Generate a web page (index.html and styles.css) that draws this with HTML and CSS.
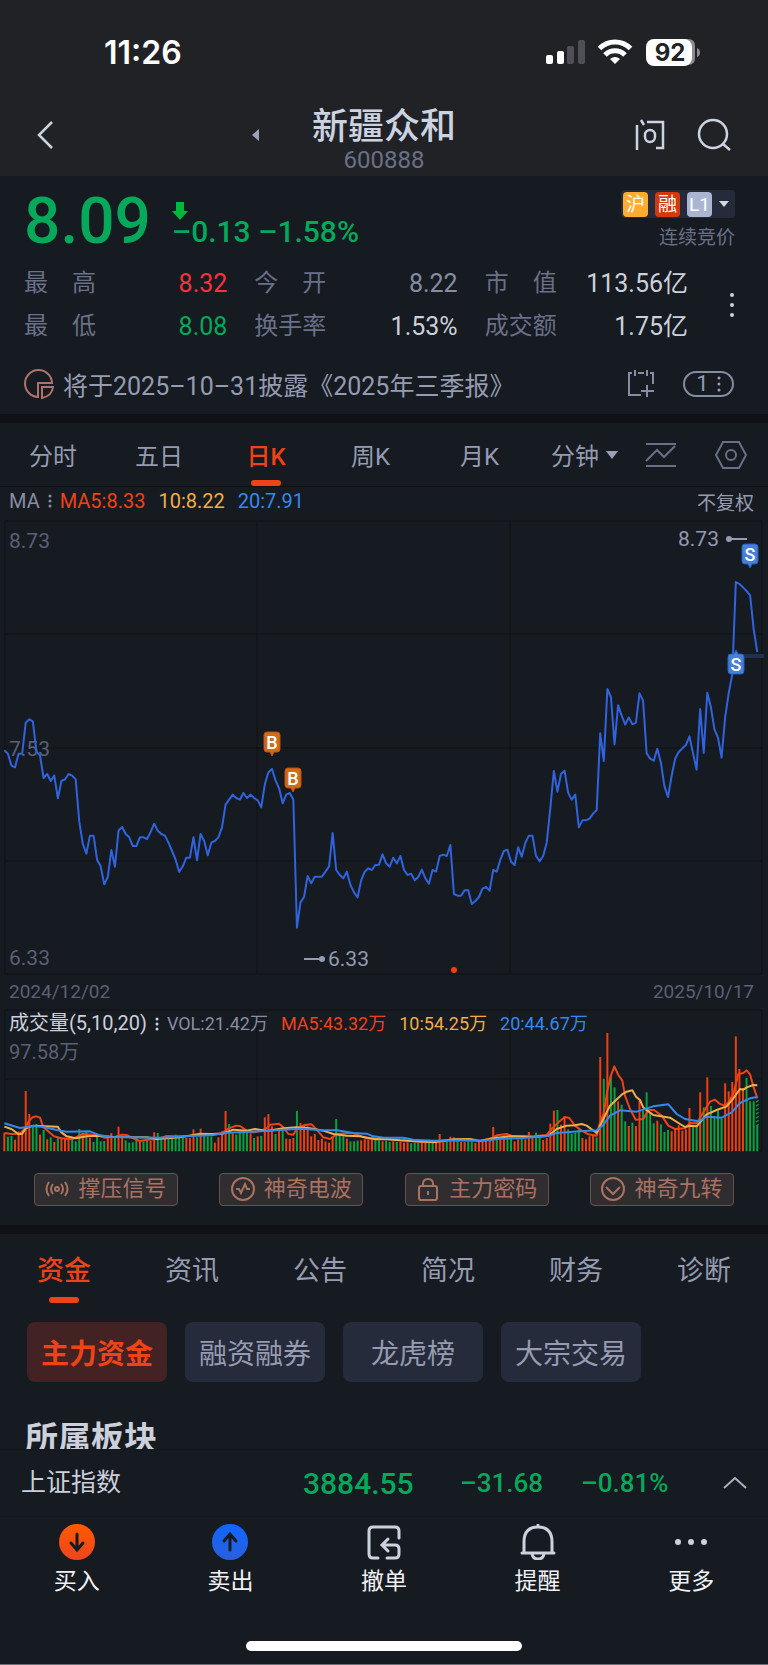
FILE: index.html
```html
<!DOCTYPE html>
<html lang="zh-CN">
<head>
    <meta charset="UTF-8">
    <meta name="viewport" content="width=device-width, initial-scale=1.0">
    <title>新疆众和 600888</title>
    <link rel="stylesheet" href="styles.css">
</head>
<body>
    <header class="header">
        <div class="status-bar">
            <span class="time">11:26</span>
            <svg class="status-icons" width="156" height="30" viewBox="0 0 156 30">
                <rect x="1" y="17" width="7" height="9" rx="2" fill="#fff"/>
                <rect x="12" y="13" width="7" height="13" rx="2" fill="#fff"/>
                <rect x="22" y="8" width="7" height="18" rx="2" fill="#4f5055"/>
                <rect x="33" y="2" width="7" height="24" rx="2" fill="#4f5055"/>
                <g fill="none" stroke="#fff" stroke-width="5">
                    <path d="M54.500 10.500a21.500 21.500 0 0 1 31 0"/>
                    <path d="M60 17a14 14 0 0 1 20 0"/>
                </g>
                <path d="M65 21q5-4 10 0l-5 5z" fill="#fff"/>
                <path d="M109 1h34q7 0 7 7v12q0 7-7 7h-34z" fill="#8b8c90"/>
                <rect x="101" y="1" width="46" height="27" rx="8" fill="#fff"/>
                <path d="M152 10q3 1 3 4.500t-3 4.500z" fill="#8b8c90"/>
                <text x="125" y="23" text-anchor="middle" class="battery-text">92</text>
            </svg>
        </div>
        <nav class="nav">
            <div class="nav-left">
                <button class="icon-button" aria-label="返回">
                    <svg width="18" height="30" viewBox="0 0 18 30"><path d="M16 2 3 15l13 13" fill="none" stroke="#ccd3e0" stroke-width="2.500"/></svg>
                </button>
                <button class="icon-button" aria-label="上一只">
                    <svg width="8" height="12" viewBox="0 0 8 12"><path d="M7 0v12L0 6z" fill="#9aa2b8"/></svg>
                </button>
            </div>
            <div class="nav-title">
                <h1>新疆众和</h1>
                <p>600888</p>
            </div>
            <div class="nav-right">
                <button class="icon-button" aria-label="问">
                    <svg width="32" height="34" viewBox="0 0 32 34" fill="none" stroke="#ccd3e0" stroke-width="2.500">
                        <path d="M3 7v25M7 2l3 5M13 4h16v26h-7"/>
                        <rect x="11" y="12" width="10" height="12" rx="5"/>
                    </svg>
                </button>
                <button class="icon-button" aria-label="搜索">
                    <svg width="36" height="34" viewBox="0 0 36 34" fill="none" stroke="#ccd3e0" stroke-width="2.500">
                        <circle cx="17" cy="16" r="14"/><path d="m27 26 7 6"/>
                    </svg>
                </button>
            </div>
        </nav>
    </header>

    <section class="quote">
        <div class="quote-top">
            <span class="price">8.09</span>
            <div class="change">
                <svg width="16" height="18" viewBox="0 0 16 18"><path d="M4 0h8v9h4l-8 9-8-9h4z" fill="#00b83c"/></svg>
                <p><span>–0.13</span> <span>–1.58%</span></p>
            </div>
            <div class="quote-side">
                <button class="badges" aria-label="沪 融 L1">
                    <span class="badge badge-hu">沪</span>
                    <span class="badge badge-rong">融</span>
                    <span class="badge badge-l1">L1</span>
                    <svg width="10" height="6" viewBox="0 0 10 6"><path d="M0 0h10L5 6z" fill="#d5d9e4"/></svg>
                </button>
                <p>连续竞价</p>
            </div>
        </div>
        <div class="stats-row">
            <dl class="stats">
                <div><dt>最　高</dt><dd class="red">8.32</dd></div>
                <div><dt>今　开</dt><dd class="muted">8.22</dd></div>
                <div><dt>市　值</dt><dd>113.56亿</dd></div>
                <div><dt>最　低</dt><dd class="green">8.08</dd></div>
                <div><dt>换手率</dt><dd>1.53%</dd></div>
                <div><dt>成交额</dt><dd>1.75亿</dd></div>
            </dl>
            <button class="icon-button" aria-label="更多行情">
                <svg width="6" height="26" viewBox="0 0 6 26" fill="#ccd0db"><circle cx="3" cy="3" r="2"/><circle cx="3" cy="13" r="2"/><circle cx="3" cy="23" r="2"/></svg>
            </button>
        </div>
        <div class="notice">
            <svg width="30" height="32" viewBox="0 0 30 32" fill="none" stroke="#b0716a" stroke-width="2">
                <path d="M14 29A13.500 13.500 0 1 1 28 15H14z"/><path d="M18 19h11q-1 9-11 11z"/>
            </svg>
            <a href="#">将于2025–10–31披露《2025年三季报》</a>
            <button class="icon-button" aria-label="加入日历">
                <svg width="28" height="28" viewBox="0 0 28 28" fill="none" stroke="#868da3" stroke-width="2">
                    <path d="M5 3H2v22h12M8 0v6M11 3h6M20 0v6M23 3h3v11M20 15v12M14 21h13"/>
                </svg>
            </button>
            <button class="count-pill">1
                <svg width="4" height="16" viewBox="0 0 4 16" fill="#9ca2b5"><circle cx="2" cy="2" r="1.500"/><circle cx="2" cy="8" r="1.500"/><circle cx="2" cy="14" r="1.500"/></svg>
            </button>
        </div>
    </section>

    <section class="chart">
        <div class="period-tabs">
            <button>分时</button>
            <button>五日</button>
            <button class="active">日K</button>
            <button>周K</button>
            <button>月K</button>
            <button class="minute">分钟<svg width="12" height="8" viewBox="0 0 12 8"><path d="M0 0h12L6 8z" fill="#9aa1b6"/></svg></button>
            <button aria-label="指标">
                <svg width="32" height="26" viewBox="0 0 32 26" fill="none" stroke="#687087" stroke-width="2"><path d="M1 2h30M1 24h30M1 19l11-11 7 7L30 4"/></svg>
            </button>
            <button aria-label="设置">
                <svg width="34" height="30" viewBox="0 0 34 30" fill="none" stroke="#687087" stroke-width="2"><path d="M9 2h16l7 13-7 13H9L2 15z"/><circle cx="17" cy="15" r="5"/></svg>
            </button>
        </div>

        <div class="legend price-legend">
            <span class="muted">MA</span>
            <svg width="4" height="14" viewBox="0 0 4 14" fill="#868da3"><circle cx="2" cy="2" r="1.500"/><circle cx="2" cy="7" r="1.500"/><circle cx="2" cy="12" r="1.500"/></svg>
            <span class="ma5">MA5:8.33</span>
            <span class="ma10">10:8.22</span>
            <span class="ma20">20:7.91</span>
            <button class="adjust">不复权</button>
        </div>

        <svg class="plot" viewBox="0 0 768 460" role="img" aria-label="日K走势">
            <path class="grid" d="M5 6h757v453H5zM5 119h757M5 233h757M5 346h757M257 6v453M510 6v453"/>
            <text class="axis" x="9" y="33">8.73</text>
            <text class="axis" x="9" y="241">7.53</text>
            <text class="axis" x="9" y="450">6.33</text>
            <rect x="728" y="139" width="36" height="4" fill="#20314f"/>
            <svg width="768" height="460" viewBox="0 0 2304 1380">
                <polyline id="priceLine" class="line" stroke="#2f64de"/>
            </svg>
            <g class="extreme">
                <path d="M304 444h17M729 24h18"/>
                <circle cx="322" cy="444" r="3"/>
                <circle cx="729" cy="24" r="3"/>
                <text x="328" y="451">6.33</text>
                <text x="678" y="31">8.73</text>
            </g>
            <circle cx="454" cy="455" r="3" fill="#ff3c0a"/>
            <g class="mark buy">
                <path d="M267 217h10q3 0 3 3v14q0 3-3 3h-3l-2 4-2-4h-3q-3 0-3-3v-14q0-3 3-3z"/>
                <text x="272" y="234">B</text>
                <path d="M288 253h10q3 0 3 3v14q0 3-3 3h-3l-2 4-2-4h-3q-3 0-3-3v-14q0-3 3-3z"/>
                <text x="293" y="270">B</text>
            </g>
            <g class="mark sell">
                <path d="M745 29h10q3 0 3 3v14q0 3-3 3h-3l-2 4-2-4h-3q-3 0-3-3V32q0-3 3-3z"/>
                <text x="750" y="46">S</text>
                <path d="M731 139h3l2-4 2 4h3q3 0 3 3v14q0 3-3 3h-10q-3 0-3-3v-14q0-3 3-3z"/>
                <text x="736" y="156">S</text>
            </g>
        </svg>
        <div class="dates"><span>2024/12/02</span><span>2025/10/17</span></div>

        <div class="volume">
            <svg class="plot" viewBox="0 0 768 143" role="img" aria-label="成交量">
                <path class="grid" d="M5 1h757v141H5zM5 70h757M257 1v141M510 1v141"/>
                <svg width="768" height="143" viewBox="0 30 2304 429">
                    <g id="volumeBars"></g>
                    <polyline class="line" stroke="#ee4217" points="13,402 34,405 60,404 77,385 87,365 98,355 109,352 120,356 130,385 141,394 162,412 184,418 216,421 248,405 291,408 312,416 344,414 366,407 380,408 400,418 419,426 441,422 473,420 500,411 540,412 570,410 600,404 640,405 665,402 687,388 708,380 720,381 740,395 760,400 780,396 800,388 810,377 837,374 850,385 865,405 880,407 890,390 915,378 935,376 950,392 970,415 990,420 1010,406 1040,402 1060,403 1100,418 1160,420 1200,424 1280,430 1330,424 1400,422 1440,426 1475,418 1490,409 1520,405 1535,410 1600,412 1640,408 1655,390 1675,370 1695,354 1708,357 1725,380 1745,395 1765,406 1790,410 1797,380 1812,340 1822,275 1832,232 1843,202 1855,228 1867,245 1875,290 1890,330 1907,362 1930,360 1945,333 1962,333 1985,350 2005,380 2025,390 2055,388 2070,372 2090,373 2110,340 2130,308 2145,302 2160,315 2175,320 2185,310 2200,285 2215,225 2230,222 2240,214 2250,226 2260,262 2272,298"/>
                    <polyline class="line" stroke="#f0ad4a" points="13,383 34,390 55,405 66,405 77,388 100,380 173,383 184,400 200,412 227,418 260,412 300,410 340,414 440,415 470,420 540,415 600,405 665,405 700,392 740,395 765,390 800,396 850,388 890,385 930,388 970,395 1000,405 1040,410 1080,412 1110,418 1130,421 1152,420 1200,424 1300,430 1330,426 1360,421 1410,420 1440,426 1480,418 1530,412 1600,414 1645,410 1670,390 1700,380 1725,379 1745,375 1760,380 1790,402 1810,360 1830,320 1865,287 1880,278 1897,274 1908,293 1920,303 1930,326 1960,348 2010,356 2040,375 2055,384 2070,380 2090,382 2120,346 2150,333 2180,322 2200,298 2220,270 2230,272 2240,265 2260,258 2272,259"/>
                    <polyline class="line" stroke="#3489ee" points="13,373 60,387 100,381 130,384 170,393 200,398 270,397 300,409 330,414 480,416 560,412 640,408 680,401 800,396 850,392 900,389 960,393 1010,394 1060,402 1100,404 1120,412 1152,416 1210,416 1240,422 1300,425 1400,424 1450,425 1500,419 1560,418 1640,412 1670,402 1740,397 1790,394 1810,378 1830,350 1860,334 1910,338 1960,322 2005,316 2030,345 2055,360 2095,367 2120,353 2165,356 2195,340 2220,312 2250,298 2272,294"/>
                </svg>
            </svg>
            <div class="volume-info">
                <div class="legend">
                    <span class="light">成交量(5,10,20)</span>
                    <svg width="4" height="14" viewBox="0 0 4 14" fill="#ccd0db"><circle cx="2" cy="2" r="1.500"/><circle cx="2" cy="7" r="1.500"/><circle cx="2" cy="12" r="1.500"/></svg>
                    <span class="muted">VOL:21.42万</span>
                    <span class="ma5">MA5:43.32万</span>
                    <span class="ma10">10:54.25万</span>
                    <span class="ma20">20:44.67万</span>
                </div>
                <p>97.58万</p>
            </div>
        </div>

        <div class="signals">
            <button>
                <svg width="24" height="24" viewBox="0 0 24 24"><circle cx="12" cy="12" r="2"/><path d="M8 7q-4 5 0 10M16 7q4 5 0 10M4 5q-5 7 0 14M20 5q5 7 0 14"/></svg>
                撑压信号
            </button>
            <button>
                <svg width="24" height="24" viewBox="0 0 24 24"><circle cx="12" cy="12" r="11"/><path d="M5 12h3l2 4 4-9 2 5h3"/></svg>
                神奇电波
            </button>
            <button>
                <svg width="24" height="24" viewBox="0 0 24 24"><rect x="3" y="9" width="18" height="14" rx="2"/><path d="M7 9V7q0-5 5-5t5 5v2M12 14v4"/></svg>
                主力密码
            </button>
            <button>
                <svg width="24" height="24" viewBox="0 0 24 24"><circle cx="12" cy="12" r="11"/><path d="m5 10 7 7 7-7"/></svg>
                神奇九转
            </button>
        </div>
    </section>

    <section class="details">
        <div class="info-tabs">
            <button class="active">资金</button>
            <button>资讯</button>
            <button>公告</button>
            <button>简况</button>
            <button>财务</button>
            <button>诊断</button>
        </div>
        <div class="chips">
            <button class="active">主力资金</button>
            <button>融资融券</button>
            <button>龙虎榜</button>
            <button>大宗交易</button>
        </div>
        <h2>所属板块</h2>
    </section>

    <footer class="footer">
        <div class="index-row">
            <span class="index-name">上证指数</span>
            <span class="index-value">3884.55</span>
            <span>–31.68</span>
            <span>–0.81%</span>
            <button class="icon-button" aria-label="展开">
                <svg width="24" height="14" viewBox="0 0 24 14"><path d="M1 12 12 2l11 10" fill="none" stroke="#a9b0c2" stroke-width="2"/></svg>
            </button>
        </div>
        <div class="actions">
            <button>
                <svg width="36" height="36" viewBox="0 0 36 36">
                    <defs><linearGradient id="buy" x2="0" y2="1"><stop stop-color="#ff5a00"/><stop offset="1" stop-color="#ee4420"/></linearGradient></defs>
                    <circle cx="18" cy="18" r="18" fill="url(#buy)"/>
                    <path d="M18 10v15M12 19l6 7 6-7" fill="none" stroke="#161a21" stroke-width="3" stroke-linecap="round"/>
                </svg>
                买入
            </button>
            <button>
                <svg width="36" height="36" viewBox="0 0 36 36">
                    <defs><linearGradient id="sell" x2="0" y2="1"><stop stop-color="#0f66ff"/><stop offset="1" stop-color="#2a5fdc"/></linearGradient></defs>
                    <circle cx="18" cy="18" r="18" fill="url(#sell)"/>
                    <path d="M18 26V11M12 17l6-7 6 7" fill="none" stroke="#161a21" stroke-width="3" stroke-linecap="round"/>
                </svg>
                卖出
            </button>
            <button>
                <svg width="36" height="36" viewBox="0 0 36 36" fill="none" stroke="#ccd1de" stroke-width="3" stroke-linecap="round">
                    <path d="M12 34H7q-4 0-4-4V7q0-4 4-4h22q4 0 4 4v7M22 15l-6 6 6 6M17 21h12q4 0 4 4v5q0 4-4 4h-8"/>
                </svg>
                撤单
            </button>
            <button>
                <svg width="36" height="36" viewBox="0 0 36 36" fill="none" stroke="#ccd1de" stroke-width="3" stroke-linecap="round">
                    <path d="M4 29V18Q4 3 18 3t14 15v11M2 29h32M18 1v2M12 30q1 5 6 5t6-5"/>
                </svg>
                提醒
            </button>
            <button>
                <svg width="36" height="36" viewBox="0 0 36 36" fill="#ccd1de"><circle cx="5" cy="18" r="3"/><circle cx="18" cy="18" r="3"/><circle cx="31" cy="18" r="3"/></svg>
                更多
            </button>
        </div>
        <div class="home-indicator"></div>
    </footer>
    <script src="chart.js"></script>
</body>
</html>
```
FILE: styles.css
```css
* {
    box-sizing: border-box;
}

body {
    margin: 0;
    background-color: #161a21;
    color: #ccd0db;
    font-family: Roboto, "Noto Sans CJK SC", sans-serif;
    font-size: 24px;
}

h1, h2, p, dl, dd {
    margin: 0;
}

svg {
    flex: none;
}

a {
    color: inherit;
    text-decoration: none;
}

button {
    margin: 0;
    padding: 0;
    border: none;
    background: none;
    color: inherit;
    font: inherit;
    cursor: pointer;
}

.icon-button {
    display: flex;
    align-items: center;
}

.red {
    color: #f5333f;
}

.green {
    color: #06a85a;
}

.muted {
    color: #868da3;
}

.light {
    color: #ccd0db;
}

.ma5 {
    color: #ee4217;
}

.ma10 {
    color: #f0ad4a;
}

.ma20 {
    color: #3489ee;
}

/* Header */
.header {
    background-color: #212226;
}

.status-bar {
    display: flex;
    justify-content: space-between;
    align-items: center;
    height: 90px;
    padding: 15px 67px 0 104px;
}

.time {
    color: #fff;
    font-family: Inter, sans-serif;
    font-size: 32px;
    font-weight: 600;
}

.battery-text {
    fill: #212226;
    font-family: Inter, sans-serif;
    font-size: 24px;
    font-weight: 700;
}

.nav {
    display: grid;
    grid-template-columns: 1fr auto 1fr;
    align-items: center;
    height: 86px;
    padding: 4px 36px 0;
}

.nav-left {
    display: flex;
    justify-content: space-between;
    padding-right: 52px;
}

.nav-right {
    display: flex;
    justify-content: flex-end;
    gap: 30px;
}

.nav-title {
    padding-top: 5px;
    text-align: center;
}

.nav h1 {
    color: #ccd3e0;
    font-size: 36px;
    font-weight: 500;
    line-height: 44px;
}

.nav p {
    color: #697087;
    line-height: 22px;
}

/* Quote */
.quote {
    padding: 13px 24px 0;
    border-bottom: 9px solid #101116;
}

.quote-top {
    display: flex;
    height: 73px;
}

.price {
    color: #06a85a;
    font-size: 64px;
    font-weight: 500;
    line-height: 66px;
}

.change {
    padding: 13px 0 0 21px;
    color: #06a85a;
    font-size: 30px;
    font-weight: 500;
    line-height: 24px;
}

.change svg {
    display: block;
}

.quote-side {
    margin: 1px 9px 0 auto;
    color: #697087;
    font-size: 19px;
    line-height: 40px;
    text-align: right;
}

.badges {
    display: flex;
    align-items: center;
    gap: 7px;
    height: 28px;
    padding: 0 6px 0 2px;
    border-radius: 4px;
    background-color: #262b3b;
}

.badge {
    width: 25px;
    border-radius: 4px;
    color: #fff;
    font-size: 19px;
    line-height: 25px;
    text-align: center;
}

.badge-hu {
    background-color: #ffac30;
}

.badge-rong {
    background-color: #d4380d;
}

.badge-l1 {
    background-color: #abb5d2;
}

.stats-row {
    display: flex;
    justify-content: space-between;
    padding-right: 9px;
}

.stats {
    display: grid;
    grid-template-columns: repeat(3, 1fr);
    column-gap: 27px;
    flex: 1;
    max-width: 664px;
    line-height: 43px;
}

.stats div {
    display: flex;
    justify-content: space-between;
}

.stats dt {
    color: #697087;
}

.stats dd {
    font-size: 25px;
}

.notice {
    display: flex;
    align-items: center;
    height: 66px;
    padding: 5px 10px 0 0;
    color: #959bb0;
    font-size: 25px;
}

.notice a {
    margin: 0 auto 0 9px;
}

.count-pill {
    display: flex;
    justify-content: center;
    align-items: center;
    gap: 8px;
    width: 51px;
    height: 26px;
    margin-left: 28px;
    border: 2px solid #868da3;
    border-radius: 13px;
    font-size: 22px;
}

/* Charts */
.period-tabs {
    display: grid;
    grid-template-columns: 106px 106px 108px 101px 117px 1fr 86px 54px;
    height: 63px;
    padding-right: 10px;
    color: #959bb0;
}

.period-tabs button {
    display: flex;
    justify-content: center;
    align-items: center;
    gap: 7px;
    position: relative;
}

.period-tabs .minute {
    justify-content: flex-end;
}

.period-tabs .active,
.info-tabs .active {
    color: #ee4217;
    font-weight: 500;
}

.period-tabs .active::after,
.info-tabs .active::after {
    content: "";
    position: absolute;
    bottom: 0;
    left: 50%;
    width: 30px;
    height: 6px;
    margin-left: -15px;
    border-radius: 3px;
    background-color: #ee4217;
}

.legend {
    display: flex;
    align-items: center;
    gap: 13px;
    font-size: 20px;
}

.legend svg {
    margin: 0 -5px;
}

.price-legend {
    height: 29px;
    padding: 0 14px 0 9px;
    border-top: 1px solid #101116;
}

.adjust {
    margin-left: auto;
    color: #959bb0;
    font-size: 19px;
}

.plot {
    display: block;
    width: 100%;
}

.grid {
    fill: none;
    stroke: #0f1014;
    stroke-width: 1;
}

.line {
    fill: none;
    stroke-width: 6;
    stroke-linejoin: round;
}

.axis {
    fill: #5b6074;
    font-size: 21px;
}

.extreme {
    fill: #959bb0;
    stroke-width: 2;
    font-size: 21px;
}

.extreme path {
    stroke: #959bb0;
}

.mark text {
    fill: #fff;
    font-size: 18px;
    font-weight: 500;
    text-anchor: middle;
}

.buy path {
    fill: #c96f1b;
    stroke: #c84a10;
}

.sell path {
    fill: #4781cf;
    stroke: #1c5fce;
}

.dates {
    display: flex;
    justify-content: space-between;
    padding: 0 14px 0 9px;
    color: #5b6074;
    font-size: 19px;
    line-height: 34px;
}

.volume {
    position: relative;
}

.volume-info {
    position: absolute;
    top: 0;
    left: 9px;
    color: #5b6074;
    font-size: 20px;
    line-height: 29px;
}

.volume-info .legend {
    font-size: 18px;
}

.volume-info .light {
    font-size: 20px;
}

.up {
    fill: #ee3f10;
}

.down {
    fill: #06a33c;
}

.signals {
    display: flex;
    justify-content: space-between;
    padding: 21px 34px 19px;
    border-bottom: 9px solid #101116;
}

.signals button {
    display: flex;
    justify-content: center;
    align-items: center;
    gap: 9px;
    width: 144px;
    height: 33px;
    padding-bottom: 2px;
    border: 1px solid #64524f;
    border-radius: 4px;
    background-color: #302d30;
    color: #a97261;
    font-size: 22px;
    line-height: 30px;
}

.signals svg {
    fill: none;
    stroke: #a97261;
    stroke-width: 2;
}

/* Details */
.info-tabs {
    display: grid;
    grid-template-columns: repeat(6, 1fr);
    height: 69px;
    color: #959bb0;
    font-size: 27px;
}

.info-tabs button {
    position: relative;
}

.chips {
    display: flex;
    gap: 18px;
    padding: 19px 27px 0;
}

.chips button {
    width: 140px;
    height: 60px;
    border-radius: 8px;
    background-color: #262b3b;
    color: #959bb0;
    font-size: 28px;
}

.chips .active {
    background-color: #422222;
    color: #ee4217;
    font-weight: 700;
}

.details h2 {
    height: 67px;
    padding: 37px 25px 0;
    overflow: hidden;
    font-size: 33px;
    font-weight: 700;
    line-height: 40px;
}

/* Bottom bar */
.footer {
    border-bottom: 1px solid #6b7078;
    background-color: #161a21;
}

.index-row {
    display: grid;
    grid-template-columns: 282px 157px 121px 1fr auto;
    align-items: center;
    height: 68px;
    padding: 0 21px;
    border-top: 1px solid #14171d;
    border-bottom: 1px solid #14171d;
    color: #06a85a;
    font-size: 26px;
    font-weight: 500;
}

.index-name {
    color: #ccd0db;
    font-size: 25px;
    font-weight: 400;
    line-height: 30px;
}

.index-value {
    font-size: 30px;
}

.actions {
    display: grid;
    grid-template-columns: repeat(5, 1fr);
    padding-top: 7px;
    color: #f0f1f4;
    font-size: 23px;
}

.actions button {
    display: flex;
    flex-direction: column;
    align-items: center;
    gap: 5px;
    line-height: 34px;
}

.home-indicator {
    width: 36%;
    height: 10px;
    margin: 42px auto 13px;
    border-radius: 5px;
    background-color: #fff;
}
```
FILE: chart.js
```js
// One value per trading day, in plot units from the top of the panel
const closes = [
    706, 716, 752, 757, 716, 716, 623, 613, 619, 710, 721, 789, 777, 798, 782, 850, 798, 793, 777, 782,
    793, 920, 987, 1016, 962, 962, 1034, 1054, 1108, 1086, 1005, 1055, 947, 936, 957, 967, 993, 993, 967, 967,
    972, 951, 926, 947, 957, 962, 983, 1008, 1034, 1071, 1054, 1028, 1028, 967, 1036, 957, 978, 1021, 983, 978,
    967, 937, 869, 854, 839, 849, 854, 834, 849, 839, 849, 856, 877, 808, 772, 762, 796, 820, 865, 839,
    834, 854, 1238, 1162, 1146, 1083, 1105, 1085, 1085, 1085, 1070, 1054, 954, 1065, 1080, 1090, 1070, 1110, 1132, 1147,
    1096, 1070, 1060, 1065, 1050, 1049, 1018, 1045, 1055, 1028, 1045, 1023, 1065, 1080, 1076, 1096, 1086, 1064, 1090, 1106,
    1065, 1070, 1023, 1019, 1023, 990, 1137, 1142, 1142, 1126, 1126, 1167, 1158, 1146, 1121, 1116, 1127, 1065, 1070, 1034,
    1008, 1004, 1040, 1050, 997, 1025, 984, 962, 962, 1022, 1039, 1023, 983, 880, 768, 830, 777, 767, 833, 854,
    839, 937, 916, 916, 911, 896, 885, 655, 738, 522, 546, 688, 571, 602, 629, 607, 628, 623, 535, 557,
    715, 731, 737, 701, 743, 814, 846, 783, 731, 711, 700, 690, 664, 715, 764, 582, 714, 533, 576, 643,
    668, 728, 607, 535, 478, 201, 207, 217, 228, 241, 343, 411
];

// Bar heights, negative for days that closed down
const volumes = [
    55, -44, -46, 35, 60, 55, 181, 112, -75, -82, 50, -64, 36, -42, 28, -42, 42, 38, 40, -40,
    -30, -67, 55, -58, 40, -28, -52, -30, -31, 45, 55, -42, 74, 48, -33, -26, -27, -42, 28, -30,
    -36, 31, 57, -55, -40, 38, -44, -45, -50, -44, -42, 40, 40, 66, -42, 68, -50, -45, -45, 26,
    42, 60, 121, -82, 54, -50, -58, -60, -58, 54, -40, 45, -46, 102, 112, 75, -52, 65, -64, 38,
    37, 40, -121, 85, 80, 75, 45, 52, 34, 38, 30, 26, 45, -97, -48, -45, 38, -30, -30, -32,
    33, 36, 35, 38, -34, -33, 30, -32, -28, 30, -28, 28, 26, 27, -24, -26, -25, 27, 26, -35,
    -28, 30, 52, 34, -30, 44, 42, -36, 28, 28, -30, -30, 25, 28, 30, 32, 40, 73, -48, 38,
    48, -46, -42, 30, 36, -38, 36, 58, 40, -56, -44, 34, 40, 83, 122, -124, 80, 105, -66, -53,
    -56, -66, 40, 36, 45, 48, -42, 283, -218, 355, -228, -192, 150, -140, -90, 76, -86, 76, 152, -122,
    -177, -115, -84, 92, -81, -58, -64, 60, 65, 78, 62, 66, 130, -78, -78, 177, -132, 222, -136, -105,
    -122, -98, 204, 180, 208, 345, 247, 190, -220, -150, -150, -78
];

const firstX = 13;
const stepX = 10.705;
const baseline = 457;

document.getElementById('priceLine').setAttribute('points',
    closes.map((y, i) => `${(firstX + i * stepX).toFixed(1)},${y}`).join(' '));

let bars = volumes.map((v, i) => {
    const height = Math.abs(v);
    const x = (firstX + i * stepX - 3).toFixed(1);
    return `<rect class="${v > 0 ? 'up' : 'down'}" x="${x}" y="${baseline - height}" width="6" height="${height}"/>`;
}).join('');

// Estimated volume for the rest of today
const todayX = firstX + (volumes.length - 1) * stepX;
for (let y = 304; y < 378; y += 12) {
    bars += `<path d="M${todayX - 4} ${y + 6}l8 -6" stroke="#06a33c" stroke-width="4"/>`;
}

document.getElementById('volumeBars').innerHTML = bars;
```
